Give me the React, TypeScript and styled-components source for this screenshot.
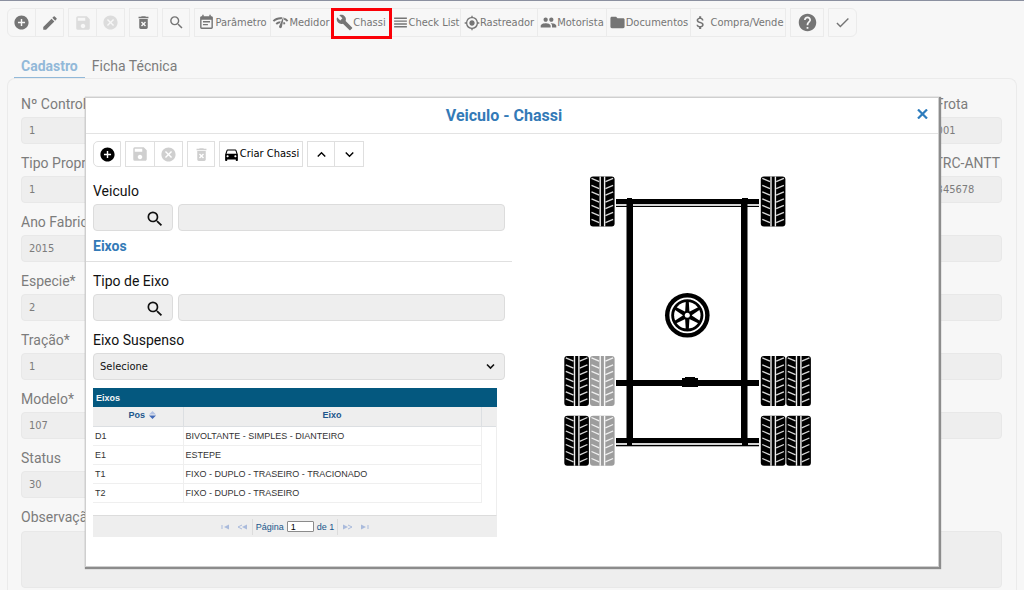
import React from "react";
import styled, { createGlobalStyle, css } from "styled-components";
import {
  MdAddCircle, MdEdit, MdSave, MdCancel, MdDeleteForever, MdSearch, MdEventNote,
  MdNetworkCheck, MdBuild, MdReorder, MdGpsFixed, MdGroup, MdFolder, MdAttachMoney,
  MdHelp, MdCheck, MdDirectionsCar, MdKeyboardArrowUp, MdKeyboardArrowDown,
} from "react-icons/md";

const uiFont = `"DejaVu Sans Condensed", "DejaVu Sans", sans-serif`;
const labelFont = `Roboto, sans-serif`;
const gridFont = `"Liberation Sans", Arial, sans-serif`;

const GlobalStyle = createGlobalStyle`
  *, *::before, *::after { box-sizing: border-box; }
  body { margin: 0; background: #f7f7f7; font-family: ${labelFont}; }
  button, input, select, textarea { margin: 0; }
`;

const Page = styled.main`
  position: relative;
  display: flex;
  flex-direction: column;
  min-height: 100vh;
  padding: 7px 7px 0;
  border-top: 1px solid #8b90a0;
`;

const Toolbar = styled.div`
  display: flex;
  gap: 4px;
`;

const ButtonGroup = styled.div`
  display: flex;
  border: 1px solid #ebebeb;
  &:first-child { border-radius: 6px 0 0 6px; }
  &:last-child { border-radius: 0 6px 6px 0; }
`;

const ToolButton = styled.button<{ $width: number; $marked?: boolean; $gap?: number }>`
  position: relative;
  display: flex;
  align-items: center;
  justify-content: center;
  gap: ${(p) => p.$gap ?? 0}px;
  width: ${(p) => p.$width}px;
  height: 27px;
  padding: 0;
  border: 0;
  background: transparent;
  color: #757575;
  font: 11px/16px ${uiFont};
  white-space: nowrap;
  & + & { border-left: 1px solid #ebebeb; }
  &:disabled { color: #dcdcdc; }
  svg { flex: none; }
  ${(p) => p.$marked && css`
    &::after {
      content: "";
      position: absolute;
      inset: -1px -2px -3px -1px;
      border: 3px solid #fb0007;
      z-index: 1;
    }
  `}
`;

const Tabs = styled.nav`
  display: flex;
  padding-left: 7px;
  margin-top: 16px;
`;

const Tab = styled.a<{ $active?: boolean }>`
  height: 26px;
  padding: 3px 7px 0;
  font-size: 14px;
  line-height: 20px;
  text-decoration: none;
  font-weight: ${(p) => (p.$active ? 700 : 400)};
  color: ${(p) => (p.$active ? "#92b9d9" : "#7c7c7c")};
  border-bottom: 2px solid ${(p) => (p.$active ? "#92b9d9" : "transparent")};
`;

const Panel = styled.form`
  flex: 1;
  display: grid;
  grid-template-columns: 1fr 86px;
  align-content: start;
  gap: 10px;
  margin-top: -1px;
  padding: 16px 14px 0 13px;
  border: 1px solid #ebebeb;
  border-bottom: 0;
  border-radius: 8px 8px 0 0;
`;

const Field = styled.div<{ $wide?: boolean }>`
  display: flex;
  flex-direction: column;
  gap: ${(p) => (p.$wide ? 5 : 4)}px;
  min-width: 0;
  grid-column: ${(p) => (p.$wide ? "1 / -1" : "auto")};
`;

const FieldLabel = styled.label`
  height: 18px;
  font-size: 14px;
  line-height: 18px;
  color: #7c7c7c;
  white-space: nowrap;
`;

const fieldBox = css`
  height: 27px;
  width: 100%;
  padding: 0 7px;
  border: 1px solid #e8e8e8;
  border-radius: 4px;
  background: #eeeeee;
  color: #7c7c7c;
  font: 11px/16px ${uiFont};
`;

const TextInput = styled.input`
  ${fieldBox}
`;

const NotesInput = styled.textarea`
  ${fieldBox}
  height: 57px;
  resize: none;
`;

const Dialog = styled.section`
  position: absolute;
  top: 96px;
  left: 85px;
  right: 85px;
  min-height: 470px;
  background: #fff;
  border: 1px solid #cfcfcf;
  box-shadow: 1px 1px 1px 1px #8c8c8c;
  z-index: 2;
`;

const DialogHeader = styled.header`
  display: grid;
  grid-template-columns: 32px 1fr 32px;
  align-items: center;
  height: 36px;
  border-bottom: 1px solid #e3e3e3;
`;

const DialogTitle = styled.h1`
  grid-column: 2;
  margin: 0;
  padding-right: 16px;
  font-size: 16px;
  line-height: 20px;
  font-weight: 700;
  text-align: center;
  color: #337ab7;
`;

const CloseButton = styled.button`
  display: flex;
  justify-content: center;
  align-items: center;
  width: 32px;
  height: 32px;
  padding: 0 0 4px;
  border: 0;
  background: none;
  color: #2d7cbd;
`;

const DialogBody = styled.div`
  display: grid;
  grid-template-columns: 1fr 1fr;
`;

const DialogForm = styled.form`
  padding: 7px 0 28px;
`;

const DialogToolbar = styled(Toolbar)`
  padding-left: 7px;
  margin-bottom: 15px;
  ${ButtonGroup} { border-color: #dfdfdf; border-radius: 0; }
  ${ButtonGroup}:first-child { border-radius: 5px 0 0 5px; }
  ${ToolButton} { height: 24px; color: #000; border-color: #dfdfdf; }
  ${ToolButton}:disabled { color: #cfcfcf; }
`;

const DialogField = styled(Field)`
  padding: 0 7px;
  ${FieldLabel} { color: #111; }
  input, select { border-color: #dcdcdc; color: #111; }
  & + & { margin-top: 10px; }
`;

const LookupRow = styled.div`
  display: grid;
  grid-template-columns: 80px 1fr;
  gap: 5px;
`;

const Lookup = styled.div`
  position: relative;
  display: flex;
`;

const LookupButton = styled.button`
  position: absolute;
  top: 5px;
  right: 8px;
  display: flex;
  padding: 0;
  border: 0;
  background: none;
  color: #111;
`;

const SectionTitle = styled.h2`
  height: 31px;
  margin: 0 0 10px;
  padding: 5px 7px 0;
  border-bottom: 1px solid #e0e0e0;
  font-size: 14px;
  line-height: 20px;
  font-weight: 700;
  color: #337ab7;
`;

const SelectWrap = styled.div`
  position: relative;
  select { ${fieldBox} padding: 0 6px; appearance: none; color: #111; border-color: #dcdcdc; }
  svg { position: absolute; right: 10px; top: 10px; pointer-events: none; }
`;

const DataGrid = styled.div`
  margin: 8px 15px 0 7px;
  background: #fff;
  font-family: ${gridFont};
  font-size: 9px;
  line-height: 12px;
`;

const GridTitle = styled.div`
  height: 19px;
  padding: 4px 3px;
  background: #04587f;
  color: #f2f6f8;
  font-weight: 700;
`;

const GridBody = styled.div`
  height: 109px;
  border-right: 1px solid #eeeeee;
  border-bottom: 1px solid #dcdcdc;
`;

const GridTable = styled.table`
  width: 100%;
  table-layout: fixed;
  border-collapse: collapse;
  th {
    height: 19px;
    padding: 0 0 2px;
    background: #eeeeee;
    border-right: 1px solid #dcdfe2;
    border-bottom: 1px solid #dcdfe2;
    color: #20568c;
    font-weight: 700;
  }
  th:first-child { padding-left: 9px; }
  th:last-child { border-right: 0; }
  td {
    height: 19px;
    padding: 0 2px;
    border-right: 1px solid #efefef;
    border-bottom: 1px solid #efefef;
    color: #333;
    white-space: nowrap;
  }
  td:last-child { border: 0; }
`;

const SortButton = styled.button`
  display: inline-flex;
  align-items: center;
  gap: 4px;
  padding: 0;
  border: 0;
  background: none;
  color: inherit;
  font: inherit;
`;

const Pager = styled.div`
  display: flex;
  align-items: center;
  justify-content: center;
  height: 21px;
  background: #eeeeee;
  color: #20568c;
`;

const PagerButtons = styled.div`
  display: flex;
  gap: 6px;
  padding: 0 5px;
`;

const PagerButton = styled.button`
  display: flex;
  padding: 0;
  border: 0;
  background: none;
  color: #aabbdc;
`;

const PageNumber = styled.label`
  display: flex;
  align-items: center;
  gap: 3px;
  height: 16px;
  padding: 0 3px;
  border-left: 1px solid #dcdcdc;
  border-right: 1px solid #dcdcdc;
  input {
    width: 27px;
    height: 11px;
    padding: 0 3px;
    border: 1px solid #8b8b8b;
    border-radius: 1px;
    background: #fff;
    font: 9px/9px ${gridFont};
  }
`;

const Diagram = styled.figure`
  margin: 36px 0 0 48px;
  svg { display: block; }
`;

const axles = [
  ["D1", "BIVOLTANTE - SIMPLES - DIANTEIRO"],
  ["E1", "ESTEPE"],
  ["T1", "FIXO - DUPLO - TRASEIRO - TRACIONADO"],
  ["T2", "FIXO - DUPLO - TRASEIRO"],
];

const mainFields = [
  { id: "controle", label: "Nº Controle", value: "1", side: "Nº Frota", sideValue: "00001" },
  { id: "proprietario", label: "Tipo Proprietário", value: "1", side: "RNTRC-ANTT", sideValue: "12345678" },
  { id: "fabricacao", label: "Ano Fabricação", value: "2015", side: "" },
  { id: "especie", label: "Especie*", value: "2", side: "" },
  { id: "tracao", label: "Tração*", value: "1", side: "" },
  { id: "modelo", label: "Modelo*", value: "107", side: "" },
];

const treadRows = [1, 8, 14.5, 21.5, 28, 35, 42];

function Tire({ x, y, faded }: { x: number; y: number; faded?: boolean }) {
  return (
    <g transform={`translate(${x} ${y})`} opacity={faded ? 0.38 : 1}>
      <rect width="24.6" height="50" rx="3" fill="#000" />
      <path d="M10.2 0V50M14.6 0V50" stroke="#f0f0f0" strokeWidth="1.4" />
      {treadRows.map((row) => (
        <path
          key={row}
          d={`M1.5 ${row + 0.8}L9.2 ${row + 4.2}M23.1 ${row + 0.8}L15.4 ${row + 4.2}`}
          stroke="#d8d8d8"
          strokeWidth="1.3"
        />
      ))}
    </g>
  );
}

function SpareWheel({ x, y }: { x: number; y: number }) {
  return (
    <g transform={`translate(${x} ${y})`}>
      <circle r="22.3" fill="#000" />
      <circle r="17" fill="none" stroke="#fff" strokeWidth="1.8" />
      <circle r="13.2" fill="#fff" />
      {[0, 60, 120, 180, 240, 300].map((angle) => (
        <path key={angle} d="M-2.2 -3L-1.5 -14H1.5L2.2 -3Z" transform={`rotate(${angle})`} />
      ))}
      <circle r="4.4" fill="#000" />
      <circle r="2.5" fill="#fff" />
    </g>
  );
}

function ChassisDiagram() {
  return (
    <svg width="256" height="300" viewBox="560 170 256 300" role="img" aria-label="Chassi">
      <rect x="616" y="199" width="143" height="5" />
      <rect x="616" y="204" width="143" height="2" fill="#d4d4d4" />
      <rect x="616" y="206" width="143" height="1" />
      <rect x="616" y="380" width="143" height="6" />
      <path d="M682 378H685V377H695V378H698V387H682Z" />
      <rect x="616" y="438" width="143" height="5" />
      <rect x="616" y="443" width="143" height="2" fill="#d4d4d4" />
      <rect x="616" y="445" width="143" height="1.3" />
      <path d="M627 198H632V204H633V438H632V445H627V438H626.5V204H627Z" />
      <path d="M742 198H748V204H747.5V438H748V445H742V438H741V204H742Z" />
      <Tire x={590} y={176.5} />
      <Tire x={760.8} y={176.5} />
      <SpareWheel x={687.3} y={315.3} />
      {[356, 415.7].map((y) => (
        <React.Fragment key={y}>
          <Tire x={564.3} y={y} />
          <Tire x={590} y={y} faded />
          <Tire x={760.8} y={y} />
          <Tire x={786.3} y={y} />
        </React.Fragment>
      ))}
    </svg>
  );
}

function LookupField({ id, label }: { id: string; label: string }) {
  return (
    <DialogField>
      <FieldLabel htmlFor={id}>{label}</FieldLabel>
      <LookupRow>
        <Lookup>
          <TextInput id={id} />
          <LookupButton type="button" aria-label={`Pesquisar ${label}`}>
            <MdSearch size={20} />
          </LookupButton>
        </Lookup>
        <TextInput aria-label={`Descrição ${label}`} readOnly />
      </LookupRow>
    </DialogField>
  );
}

function MainToolbar() {
  return (
    <Toolbar>
      <ButtonGroup>
        <ToolButton $width={27} aria-label="Novo"><MdAddCircle size={17} /></ToolButton>
        <ToolButton $width={28} aria-label="Editar"><MdEdit size={18} /></ToolButton>
      </ButtonGroup>
      <ButtonGroup>
        <ToolButton $width={27} disabled aria-label="Salvar"><MdSave size={18} /></ToolButton>
        <ToolButton $width={28} disabled aria-label="Cancelar"><MdCancel size={17} /></ToolButton>
      </ButtonGroup>
      <ButtonGroup>
        <ToolButton $width={27} aria-label="Excluir"><MdDeleteForever size={17} /></ToolButton>
      </ButtonGroup>
      <ButtonGroup>
        <ToolButton $width={26} aria-label="Pesquisar"><MdSearch size={17} /></ToolButton>
      </ButtonGroup>
      <ButtonGroup>
        <ToolButton $width={75}><MdEventNote size={17} />Parâmetro</ToolButton>
        <ToolButton $width={61}><MdNetworkCheck size={17} />Medidor</ToolButton>
        <ToolButton $width={59} $marked><MdBuild size={17} />Chassi</ToolButton>
        <ToolButton $width={70}><MdReorder size={17} />Check List</ToolButton>
        <ToolButton $width={77}><MdGpsFixed size={16} />Rastreador</ToolButton>
        <ToolButton $width={69}><MdGroup size={17} />Motorista</ToolButton>
        <ToolButton $width={84}><MdFolder size={17} />Documentos</ToolButton>
        <ToolButton $width={95} $gap={1}><MdAttachMoney size={17} />Compra/Vende</ToolButton>
      </ButtonGroup>
      <ButtonGroup>
        <ToolButton $width={32} aria-label="Ajuda"><MdHelp size={21} /></ToolButton>
      </ButtonGroup>
      <ButtonGroup>
        <ToolButton $width={27} aria-label="Confirmar"><MdCheck size={17} /></ToolButton>
      </ButtonGroup>
    </Toolbar>
  );
}

function AxleGrid() {
  return (
    <DataGrid>
      <GridTitle>Eixos</GridTitle>
      <GridBody>
        <GridTable>
          <colgroup>
            <col style={{ width: 90 }} />
            <col />
            <col style={{ width: 15 }} />
          </colgroup>
          <thead>
            <tr>
              <th>
                <SortButton type="button">
                  Pos
                  <svg width="7" height="8" viewBox="0 0 7 8" aria-hidden="true">
                    <path d="M0 3.5L3.5 0L7 3.5Z" fill="#b3c2e2" />
                    <path d="M0 4.5L3.5 8L7 4.5Z" fill="#4169b8" />
                  </svg>
                </SortButton>
              </th>
              <th>Eixo</th>
              <th />
            </tr>
          </thead>
          <tbody>
            {axles.map(([pos, name]) => (
              <tr key={pos}>
                <td>{pos}</td>
                <td>{name}</td>
                <td />
              </tr>
            ))}
          </tbody>
        </GridTable>
      </GridBody>
      <Pager>
        <PagerButtons>
          <PagerButton type="button" aria-label="Primeira">
            <svg width="10" height="6" viewBox="0 0 10 6"><path d="M1 1V5" stroke="currentColor" /><path d="M8 .5V5.5L3 3Z" fill="currentColor" /></svg>
          </PagerButton>
          <PagerButton type="button" aria-label="Anterior">
            <svg width="10" height="6" viewBox="0 0 10 6"><path d="M5 1L1 3L5 5" fill="none" stroke="currentColor" /><path d="M10 .5V5.5L5 3Z" fill="currentColor" /></svg>
          </PagerButton>
        </PagerButtons>
        <PageNumber>
          Página <input defaultValue="1" /> de 1
        </PageNumber>
        <PagerButtons>
          <PagerButton type="button" aria-label="Próxima">
            <svg width="10" height="6" viewBox="0 0 10 6"><path d="M5 1L9 3L5 5" fill="none" stroke="currentColor" /><path d="M0 .5V5.5L5 3Z" fill="currentColor" /></svg>
          </PagerButton>
          <PagerButton type="button" aria-label="Última">
            <svg width="10" height="6" viewBox="0 0 10 6"><path d="M9 1V5" stroke="currentColor" /><path d="M2 .5V5.5L7 3Z" fill="currentColor" /></svg>
          </PagerButton>
        </PagerButtons>
      </Pager>
    </DataGrid>
  );
}

function ChassisDialog() {
  return (
    <Dialog role="dialog" aria-labelledby="dialog-title">
      <DialogHeader>
        <DialogTitle id="dialog-title">Veiculo - Chassi</DialogTitle>
        <CloseButton type="button" aria-label="Fechar">
          <svg width="11" height="10" viewBox="0 0 11 10"><path d="M1 .5L10 9.5M10 .5L1 9.5" stroke="currentColor" strokeWidth="2.2" /></svg>
        </CloseButton>
      </DialogHeader>
      <DialogBody>
        <DialogForm>
          <DialogToolbar>
            <ButtonGroup>
              <ToolButton type="button" $width={26} aria-label="Novo"><MdAddCircle size={17} /></ToolButton>
            </ButtonGroup>
            <ButtonGroup>
              <ToolButton type="button" $width={28} disabled aria-label="Salvar"><MdSave size={18} /></ToolButton>
              <ToolButton type="button" $width={28} disabled aria-label="Cancelar"><MdCancel size={17} /></ToolButton>
            </ButtonGroup>
            <ButtonGroup>
              <ToolButton type="button" $width={26} disabled aria-label="Excluir"><MdDeleteForever size={17} /></ToolButton>
            </ButtonGroup>
            <ButtonGroup>
              <ToolButton type="button" $width={82}><MdDirectionsCar size={17} />Criar Chassi</ToolButton>
            </ButtonGroup>
            <ButtonGroup>
              <ToolButton type="button" $width={26} aria-label="Acima"><MdKeyboardArrowUp size={17} /></ToolButton>
              <ToolButton type="button" $width={29} aria-label="Abaixo"><MdKeyboardArrowDown size={17} /></ToolButton>
            </ButtonGroup>
          </DialogToolbar>
          <LookupField id="veiculo" label="Veiculo" />
          <SectionTitle>Eixos</SectionTitle>
          <LookupField id="tipo-eixo" label="Tipo de Eixo" />
          <DialogField>
            <FieldLabel htmlFor="suspenso">Eixo Suspenso</FieldLabel>
            <SelectWrap>
              <select id="suspenso"><option>Selecione</option></select>
              <svg width="9" height="7" viewBox="0 0 9 7"><path d="M1 1.5L4.5 5L8 1.5" fill="none" stroke="#111" strokeWidth="1.6" /></svg>
            </SelectWrap>
          </DialogField>
          <AxleGrid />
        </DialogForm>
        <Diagram><ChassisDiagram /></Diagram>
      </DialogBody>
    </Dialog>
  );
}

export default function App() {
  return (
    <Page>
      <GlobalStyle />
      <MainToolbar />
      <Tabs>
        <Tab href="#cadastro" $active>Cadastro</Tab>
        <Tab href="#ficha">Ficha Técnica</Tab>
      </Tabs>
      <Panel>
        {mainFields.map((field) => (
          <React.Fragment key={field.id}>
            <Field>
              <FieldLabel htmlFor={field.id}>{field.label}</FieldLabel>
              <TextInput id={field.id} defaultValue={field.value} />
            </Field>
            <Field>
              <FieldLabel htmlFor={`${field.id}-2`}>{field.side}</FieldLabel>
              <TextInput id={`${field.id}-2`} defaultValue={field.sideValue} />
            </Field>
          </React.Fragment>
        ))}
        <Field>
          <FieldLabel htmlFor="status">Status</FieldLabel>
          <TextInput id="status" defaultValue="30" />
        </Field>
        <Field $wide>
          <FieldLabel htmlFor="observacao">Observação</FieldLabel>
          <NotesInput id="observacao" />
        </Field>
      </Panel>
      <ChassisDialog />
    </Page>
  );
}
